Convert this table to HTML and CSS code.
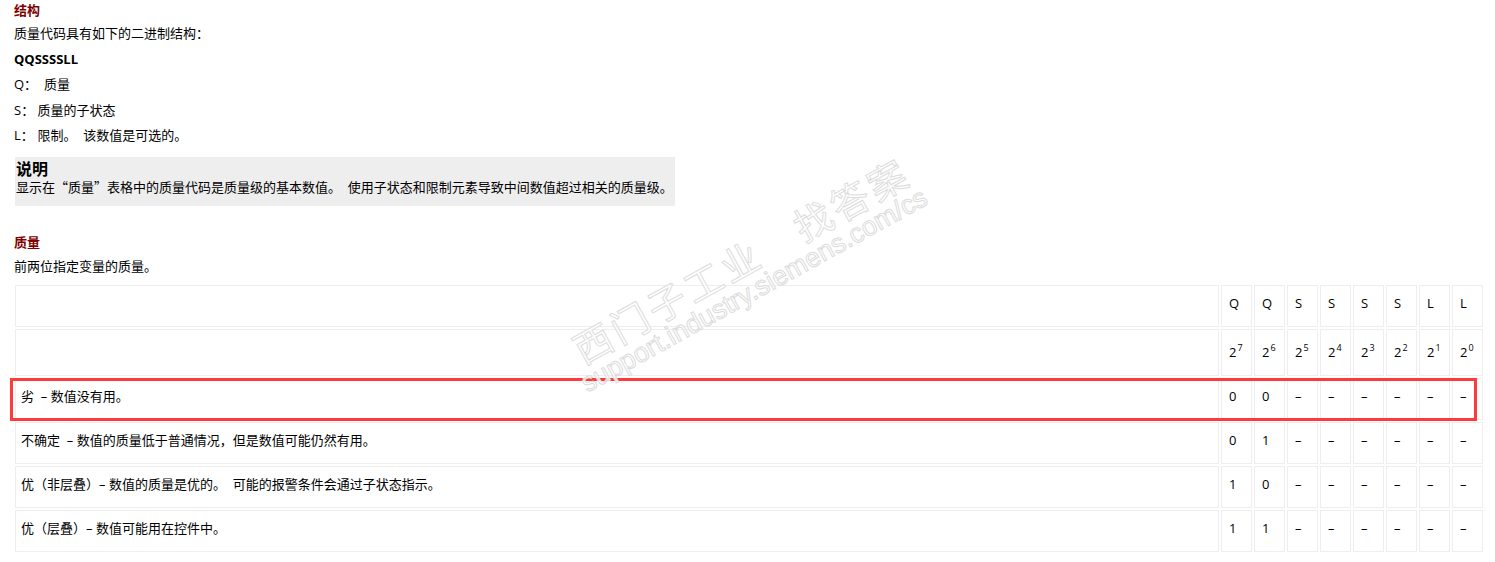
FILE: index.html
```html
<!DOCTYPE html>
<html lang="zh-CN">

<head>
    <meta charset="UTF-8" />
    <title>质量代码</title>
    <link rel="stylesheet" href="styles.css">
</head>

<body>
    <h3 class="title">结构</h3>
    <p>质量代码具有如下的二进制结构：</p>
    <p class="code">QQSSSSLL</p>
    <p><span class="key">Q：</span>&nbsp; 质量</p>
    <p><span class="key">S：</span> 质量的子状态</p>
    <p><span class="key">L：</span> 限制。 &nbsp;该数值是可选的。</p>

    <div class="note">
        <div class="note-title">说明</div>
        <div>显示在<span class="q">“</span>质量<span class="q">”</span>表格中的质量代码是质量级的基本数值。 &nbsp;使用子状态和限制元素导致中间数值超过相关的质量级。</div>
    </div>

    <h3 class="title section">质量</h3>
    <p>前两位指定变量的质量。</p>

    <div class="table-wrap">
        <table class="bits">
            <tr class="head">
                <td class="desc"></td>
                <td>Q</td><td>Q</td><td>S</td><td>S</td><td>S</td><td>S</td><td>L</td><td>L</td>
            </tr>
            <tr class="head pow">
                <td class="desc"></td>
                <td>2<sup>7</sup></td><td>2<sup>6</sup></td><td>2<sup>5</sup></td><td>2<sup>4</sup></td>
                <td>2<sup>3</sup></td><td>2<sup>2</sup></td><td>2<sup>1</sup></td><td>2<sup>0</sup></td>
            </tr>
            <tr>
                <td class="desc">劣 &nbsp;– 数值没有用。</td>
                <td>0</td><td>0</td><td>–</td><td>–</td><td>–</td><td>–</td><td>–</td><td>–</td>
            </tr>
            <tr>
                <td class="desc">不确定 &nbsp;– 数值的质量低于普通情况，但是数值可能仍然有用。</td>
                <td>0</td><td>1</td><td>–</td><td>–</td><td>–</td><td>–</td><td>–</td><td>–</td>
            </tr>
            <tr>
                <td class="desc">优（非层叠）– 数值的质量是优的。 &nbsp;可能的报警条件会通过子状态指示。</td>
                <td>1</td><td>0</td><td>–</td><td>–</td><td>–</td><td>–</td><td>–</td><td>–</td>
            </tr>
            <tr>
                <td class="desc">优（层叠）– 数值可能用在控件中。</td>
                <td>1</td><td>1</td><td>–</td><td>–</td><td>–</td><td>–</td><td>–</td><td>–</td>
            </tr>
        </table>
        <div class="highlight"></div>
    </div>

    <div class="watermark">
        <div class="wm-cn">西门子工业　找答案</div>
        <div class="wm-url">support.industry.siemens.com/cs</div>
    </div>
</body>

</html>
```

FILE: styles.css
```css
* {
    box-sizing: border-box;
}

html,
body {
    margin: 0;
    background: #fff;
}

body {
    position: relative;
    padding: 1px 10px 0 13px;
    color: #000;
    font-family: "Open Sans", "Noto Sans CJK SC", sans-serif;
    font-size: 13px;
    line-height: 18px;
    overflow: hidden;
}

p {
    margin: 0 0 7.5px 1px;
}

.title {
    margin: 0 0 5px 1px;
    font-size: 13px;
    line-height: 18px;
    font-weight: bold;
    color: #800000;
}

.title.section {
    margin-top: 27px;
    margin-bottom: 6px;
}

.code {
    font-weight: bold;
}

.key {
    display: inline-block;
    min-width: 20px;
}

.note {
    display: inline-block;
    margin: 5.5px 0 0 2px;
    padding: 3px 5px 10px 1px;
    background: #eee;
    width: 660px;
    white-space: nowrap;
}

.note-title {
    font-size: 16px;
    font-weight: bold;
}

.q {
    font-family: "Noto Sans CJK SC", sans-serif;
}

.table-wrap {
    position: relative;
    margin-top: 8px;
}

.bits {
    width: 100%;
    border-collapse: separate;
    border-spacing: 2px;
}

.bits td {
    width: 31px;
    padding: 8px 7px 14px;
    border: 1px solid #eee;
    vertical-align: top;
    white-space: nowrap;
}

.bits td.desc {
    width: auto;
    padding-left: 5px;
}

.bits .pow td {
    padding-top: 13px;
    padding-bottom: 14px;
}

.bits sup {
    font-size: 9px;
    line-height: 0;
    vertical-align: 6px;
    margin-left: 1px;
}

.highlight {
    position: absolute;
    left: -3px;
    top: 95px;
    width: 1467px;
    height: 43px;
    border: 3px solid #ff3a3a;
    pointer-events: none;
}

.watermark {
    position: absolute;
    left: 565px;
    top: 332px;
    transform: rotate(-29deg);
    transform-origin: left top;
    color: rgba(255, 255, 255, 0.85);
    -webkit-text-stroke: 1px #dcdcdc;
    pointer-events: none;
}

.wm-cn {
    font-family: "Noto Sans CJK SC", sans-serif;
    font-size: 38px;
    line-height: 44px;
    letter-spacing: 4px;
    white-space: nowrap;
}

.wm-url {
    margin: -4px 0 0 -10px;
    font-family: "Liberation Sans", sans-serif;
    font-size: 27px;
    line-height: 30px;
    white-space: nowrap;
}
```
